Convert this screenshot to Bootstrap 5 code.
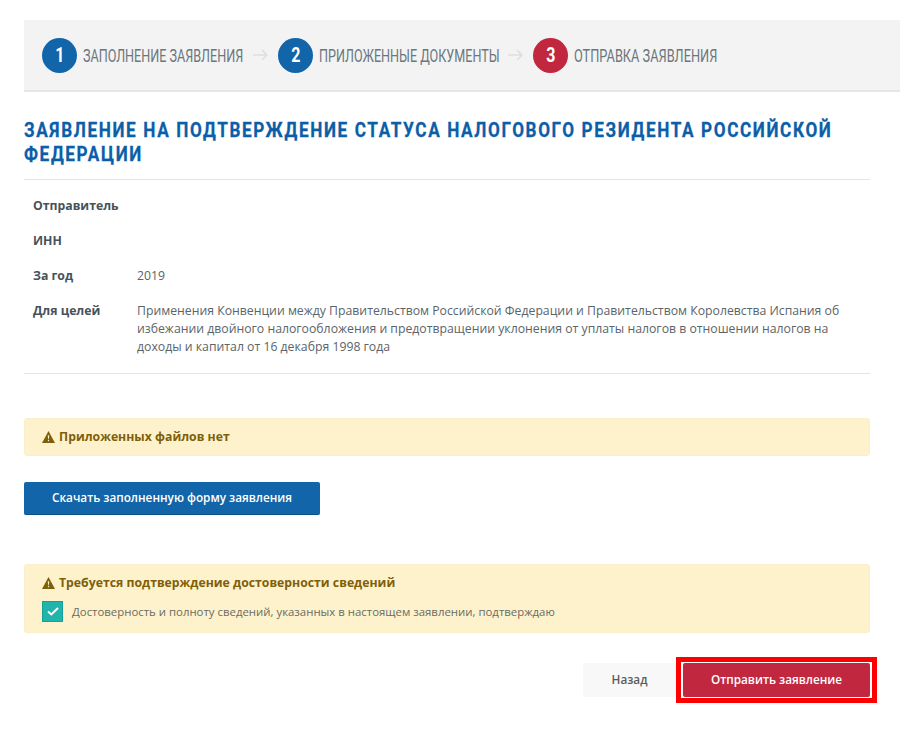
<!DOCTYPE html>
<html lang="ru">
<head>
  <meta charset="UTF-8" />
  <meta name="viewport" content="width=device-width, initial-scale=1" />
  <title>Заявление</title>
  <link href="https://cdn.jsdelivr.net/npm/bootstrap@5.3.3/dist/css/bootstrap.min.css" rel="stylesheet" />
  <style>
    body {
      font-family: "Open Sans", "Noto Sans", sans-serif;
      font-size: 12.25px;
      color: #5b6469;
      background: #fff;
    }
    .page-wrap { padding: 20px 30px 20px 24px; }
    .steps-bar {
      background: #f3f3f3;
      border-bottom: 2px solid #e6e6e6;
      height: 72px;
      margin-right: -30px;
      padding-left: 18px;
    }
    .step-num {
      width: 35px;
      height: 35px;
      flex: none;
      border-radius: 50%;
      background: #1265a8;
      color: #fff;
      font-family: "Roboto", sans-serif;
      font-weight: 700;
      font-size: 20px;
    }
    .step-num span { display: inline-block; transform: scaleX(.8); }
    .step-num-red { background: #c1273f; }
    .step-label {
      display: inline-block;
      font-family: "Roboto", sans-serif;
      font-weight: 400;
      font-size: 18px;
      color: #6b777e;
      margin-left: 6px;
      white-space: nowrap;
      transform: scaleX(.7);
      transform-origin: left center;
    }
    .step-label-1 { width: 161px; }
    .step-label-2 { width: 180px; }
    .step-label-3 { width: 143px; transform: scaleX(.71); }
    .step-arrow { margin: 0 10px 0 9px; flex: none; }
    .page-title {
      font-weight: 700;
      margin: 26px 0 0;
      padding-bottom: 13px;
      border-bottom: 1px solid #e4e4e4;
    }
    .page-title span {
      display: block;
      width: 1037px;
      font-family: "Roboto", "Liberation Sans", sans-serif;
      font-weight: 700;
      font-size: 21px;
      line-height: 24px;
      letter-spacing: 2px;
      color: #0b5ea8;
      -webkit-text-stroke: .3px #0b5ea8;
      transform: scaleX(.816);
      transform-origin: left top;
    }
    .info-block {
      padding: 17px 0 0 9px;
      border-bottom: 1px solid #e4e4e4;
      margin-bottom: 44px;
    }
    .info-row { display: flex; margin-bottom: 17px; line-height: 18px; }
    .info-row dt { width: 104px; flex: none; font-weight: 700; color: #46525a; }
    .info-row dd { margin: 0; }
    .warn-box {
      background: #fef2cd;
      border: 1px solid #fbeecb;
      border-radius: 3px;
      color: #7f5f0a;
      font-weight: 700;
      padding: 9px 18px;
      line-height: 18px;
    }
    .warn-box-check { padding-bottom: 10px; }
    .warn-icon { vertical-align: -2px; margin-left: -1px; margin-right: 4px; }
    .btn-blue {
      background: #1265a8;
      border: 0;
      border-bottom: 1px solid #0e5287;
      color: #fff;
      font-size: 11.75px;
      font-weight: 600;
      border-radius: 2px;
      width: 296px;
      height: 33px;
      padding: 0;
      margin: 26px 0 49px;
    }
    .check-box {
      width: 21px;
      height: 21px;
      margin-left: -1px;
      background: #1fb5ad;
      border: 1px solid #15a098;
      flex: none;
    }
    .check-line { font-weight: 400; font-size: 11.4px; color: #6b6b60; margin-top: 9px; }
    .check-line span + span { margin-left: 1px; }
    .btn-back {
      width: 93px;
      height: 34px;
      background: #f8f8f8;
      border: 0;
      border-radius: 0;
      color: #5b5b5b;
      font-size: 11.75px;
      font-weight: 600;
      padding: 0;
    }
    .send-frame {
      border: 5px solid #f00;
      padding: 1px 2px;
      margin-right: -7px;
      background: #fff;
    }
    .btn-send {
      width: 187px;
      height: 34px;
      background: #c1273f;
      border: 0;
      border-radius: 2px;
      color: #fff;
      font-size: 11.75px;
      font-weight: 600;
      padding: 0;
    }
  </style>
</head>
<body>
  <div class="page-wrap">
    <div class="steps-bar d-flex align-items-center">
      <div class="step-num d-flex align-items-center justify-content-center"><span>1</span></div>
      <span class="step-label step-label-1">ЗАПОЛНЕНИЕ ЗАЯВЛЕНИЯ</span>
      <svg class="step-arrow" width="15" height="12" viewBox="0 0 15 12" fill="none" stroke="#dedede" stroke-width="1.5"><path d="M0 6h14M9 1l5 5-5 5"/></svg>
      <div class="step-num d-flex align-items-center justify-content-center"><span>2</span></div>
      <span class="step-label step-label-2">ПРИЛОЖЕННЫЕ ДОКУМЕНТЫ</span>
      <svg class="step-arrow" width="15" height="12" viewBox="0 0 15 12" fill="none" stroke="#dedede" stroke-width="1.5"><path d="M0 6h14M9 1l5 5-5 5"/></svg>
      <div class="step-num step-num-red d-flex align-items-center justify-content-center"><span>3</span></div>
      <span class="step-label step-label-3">ОТПРАВКА ЗАЯВЛЕНИЯ</span>
    </div>

    <h1 class="page-title"><span>ЗАЯВЛЕНИЕ НА ПОДТВЕРЖДЕНИЕ СТАТУСА НАЛОГОВОГО РЕЗИДЕНТА РОССИЙСКОЙ ФЕДЕРАЦИИ</span></h1>

    <dl class="info-block">
      <div class="info-row"><dt>Отправитель</dt><dd></dd></div>
      <div class="info-row"><dt>ИНН</dt><dd></dd></div>
      <div class="info-row"><dt>За год</dt><dd>2019</dd></div>
      <div class="info-row"><dt>Для целей</dt><dd>Применения Конвенции между Правительством Российской Федерации и Правительством Королевства Испания об избежании двойного налогообложения и предотвращении уклонения от уплаты налогов в отношении налогов на доходы и капитал от 16 декабря 1998 года</dd></div>
    </dl>

    <div class="warn-box">
      <svg class="warn-icon" width="13" height="12" viewBox="0 0 13 12"><path fill="#7f5f0a" fill-rule="evenodd" d="M6.5 0 13 12H0ZM5.8 4.2l.2 3.6h1l.2-3.6ZM5.9 8.7v1.5h1.2V8.7Z"/></svg>Приложенных файлов нет
    </div>

    <button class="btn btn-blue d-block" type="button">Скачать заполненную форму заявления</button>

    <div class="warn-box warn-box-check">
      <div><svg class="warn-icon" width="13" height="12" viewBox="0 0 13 12"><path fill="#7f5f0a" fill-rule="evenodd" d="M6.5 0 13 12H0ZM5.8 4.2l.2 3.6h1l.2-3.6ZM5.9 8.7v1.5h1.2V8.7Z"/></svg>Требуется подтверждение достоверности сведений</div>
      <div class="check-line d-flex align-items-center gap-2">
        <span class="check-box d-flex align-items-center justify-content-center">
          <svg width="12" height="9" viewBox="0 0 12 9" fill="none" stroke="#fff" stroke-width="2"><path d="M1 4.5 4.3 7.5 11 1"/></svg>
        </span>
        <span>Достоверность и полноту сведений, указанных в настоящем заявлении, подтверждаю</span>
      </div>
    </div>

    <div class="d-flex justify-content-end align-items-center mt-4">
      <button class="btn btn-back" type="button">Назад</button>
      <div class="send-frame d-flex">
        <button class="btn btn-send" type="button">Отправить заявление</button>
      </div>
    </div>
  </div>
  <script src="https://cdn.jsdelivr.net/npm/bootstrap@5.3.3/dist/js/bootstrap.bundle.min.js"></script>
</body>
</html>
